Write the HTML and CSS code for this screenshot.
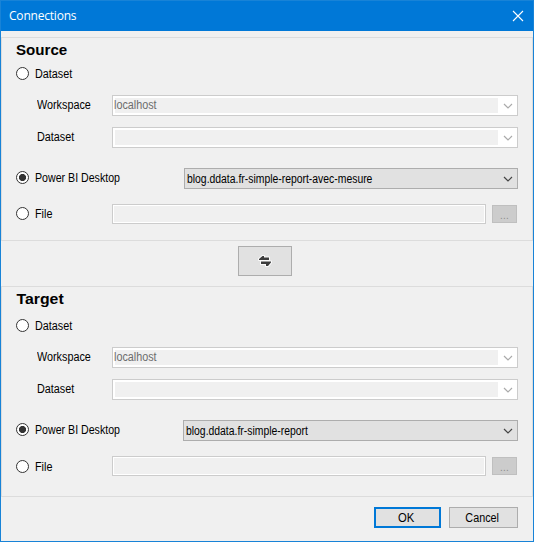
FILE: index.html
```
<!DOCTYPE html>
<html lang="en">
<head>
<meta charset="utf-8">
<title>Connections</title>
<link rel="stylesheet" href="styles.css">
</head>
<body>
<div class="window">
  <header class="titlebar">
    <span class="title">Connections</span>
    <svg class="close" width="12" height="12" viewBox="0 0 12 12"><path d="M1 1L11 11M11 1L1 11"/></svg>
  </header>

  <section class="group source">
    <h2>Source</h2>
    <div class="row first"><i class="radio"></i><span class="text">Dataset</span></div>
    <div class="row sub"><span class="text name">Workspace</span>
      <div class="combo disabled"><div class="value"><span class="text">localhost</span></div><svg class="chevron" width="10" height="6" viewBox="0 0 10 6"><path d="M1 1L5 5L9 1"/></svg></div></div>
    <div class="row sub"><span class="text name">Dataset</span>
      <div class="combo disabled"><div class="value"></div><svg class="chevron" width="10" height="6" viewBox="0 0 10 6"><path d="M1 1L5 5L9 1"/></svg></div></div>
    <div class="row desktop"><i class="radio checked"></i><span class="text name">Power BI Desktop</span>
      <div class="combo"><span class="text tight">blog.ddata.fr-simple-report-avec-mesure</span><svg class="chevron" width="10" height="6" viewBox="0 0 10 6"><path d="M1 1L5 5L9 1"/></svg></div></div>
    <div class="row file"><i class="radio"></i><span class="text name">File</span>
      <div class="field"></div><div class="browse">...</div></div>
  </section>

  <div class="swap">
    <svg width="16" height="14" viewBox="0 0 16 14">
      <path class="halo" d="M2 5L5.500 2H7V3.500H12V6H2ZM14 8.500L11 12H9V10H4V7.500H14Z"/>
      <path class="arrows" d="M2 5L5.500 2H7V3.500H12V6H2ZM14 8.500L11 12H9V10H4V7.500H14Z"/>
    </svg>
  </div>

  <section class="group target">
    <h2>Target</h2>
    <div class="row first"><i class="radio"></i><span class="text">Dataset</span></div>
    <div class="row sub"><span class="text name">Workspace</span>
      <div class="combo disabled"><div class="value"><span class="text">localhost</span></div><svg class="chevron" width="10" height="6" viewBox="0 0 10 6"><path d="M1 1L5 5L9 1"/></svg></div></div>
    <div class="row sub"><span class="text name">Dataset</span>
      <div class="combo disabled"><div class="value"></div><svg class="chevron" width="10" height="6" viewBox="0 0 10 6"><path d="M1 1L5 5L9 1"/></svg></div></div>
    <div class="row desktop"><i class="radio checked"></i><span class="text name">Power BI Desktop</span>
      <div class="combo"><span class="text tight">blog.ddata.fr-simple-report</span><svg class="chevron" width="10" height="6" viewBox="0 0 10 6"><path d="M1 1L5 5L9 1"/></svg></div></div>
    <div class="row file"><i class="radio"></i><span class="text name">File</span>
      <div class="field"></div><div class="browse">...</div></div>
  </section>

  <footer class="actions">
    <div class="button ok"><span class="text">OK</span></div>
    <div class="button cancel"><span class="text">Cancel</span></div>
  </footer>
</div>
</body>
</html>
```
FILE: styles.css
```
* { box-sizing: border-box; }
body {
  margin: 0;
  font: 12px/21px "Liberation Sans", Arial, sans-serif;
  color: #000;
}
.window {
  width: 534px;
  height: 542px;
  border: 1px solid #1883d7;
  background: #f0f0f0;
  overflow: hidden;
}
.titlebar {
  height: 30px;
  padding: 0 8px;
  display: flex;
  justify-content: space-between;
  align-items: center;
  background: #0078d7;
  color: #fff;
}
.title { font: 12px/30px "Open Sans", sans-serif; letter-spacing: -0.2px; }
.close { margin-right: 1px; }
.close path { fill: none; stroke: #fff; stroke-width: 1.1; }
.group {
  border: 1px solid #dcdcdc;
  padding-left: 14px;
}
.source { margin-top: 6px; height: 204px; }
.target { margin-top: 10px; height: 211px; }
h2 {
  margin: 0;
  width: 100px;
  height: 25px;
  font-size: 14px;
  line-height: 24px;
  transform: scaleX(1.08);
  transform-origin: 0 50%;
}
.target h2 { height: 28px; transform: translateX(0.500px) scaleX(1.13); }
.row { display: flex; height: 21px; }
.text {
  display: inline-block;
  white-space: nowrap;
  transform: scaleX(0.9);
  transform-origin: 0 50%;
}
.first .text { line-height: 23px; }
.desktop .text { transform: scaleX(0.885); }
.desktop .tight { transform: scaleX(0.866); }
.radio {
  flex: none;
  width: 13px;
  height: 13px;
  margin: 4px 6px 0 0;
  border: 1px solid #333;
  border-radius: 50%;
  background: #fff;
}
.checked { background: radial-gradient(circle, #333 3.200px, #fff 3.900px); }
.sub { margin-top: 11px; padding-left: 21px; }
.sub .name { width: 75px; }
.desktop { margin-top: 20px; }
.desktop .radio { margin-top: 3px; }
.desktop .name { width: 149px; line-height: 20px; }
.target .desktop .name { width: 148px; }
.file { margin-top: 15px; height: 20px; }
.file .radio { margin-top: 3px; }
.file .name { width: 77px; line-height: 20px; }
.target .file .radio { margin-top: 4px; }
.target .file .name { line-height: 22px; }
.combo {
  display: flex;
  justify-content: space-between;
  width: 406px;
  height: 21px;
  padding: 0 4px 0 2px;
  border: 1px solid #adadad;
  background: #e1e1e1;
  line-height: 21px;
}
.desktop .combo { width: 334px; }
.target .desktop .combo { width: 335px; }
.disabled {
  padding: 2px 4px 2px 2px;
  border-color: #ccc;
  background: #fff;
}
.value {
  width: 383px;
  height: 15px;
  background: #f0f0f0;
  color: #6d6d6d;
  line-height: 15px;
}
.value .text { transform: translateX(-1px) scaleX(0.9); }
.chevron { flex: none; align-self: center; }
.chevron path { fill: none; stroke: #444; stroke-width: 1.2; }
.disabled .chevron path { stroke: #aaa; }
.field {
  width: 374px;
  height: 20px;
  border: 1px solid #ccc;
  background: #f0f0f0;
  box-shadow: inset 0 0 0 1px #fff;
}
.browse {
  width: 25px;
  height: 18px;
  margin: 1px 0 0 6px;
  border: 1px solid #bfbfbf;
  background: #ccc;
  color: #8c8c8c;
  font-size: 10px;
  line-height: 20px;
  letter-spacing: 0.22px;
  text-align: center;
}
.swap {
  display: flex;
  align-items: center;
  justify-content: center;
  width: 54px;
  height: 30px;
  margin: 5px 0 0 237px;
  border: 1px solid #adadad;
  background: #e1e1e1;
}
.halo { fill: #fff; stroke: #fafafa; stroke-width: 2; stroke-linejoin: round; }
.arrows { fill: #3c3c3c; }
.actions {
  display: flex;
  justify-content: flex-end;
  gap: 8px;
  margin: 10px 15px 0 0;
}
.button {
  display: flex;
  justify-content: center;
  width: 69px;
  height: 21px;
  border: 1px solid #adadad;
  background: #e1e1e1;
}
.button .text { transform: translateX(-1.500px) scaleX(0.9); transform-origin: 50% 50%; }
.ok { width: 67px; border: 2px solid #0078d7; line-height: 18px; }
.ok .text { transform: translateX(-1.500px) scaleX(0.94); }
```
